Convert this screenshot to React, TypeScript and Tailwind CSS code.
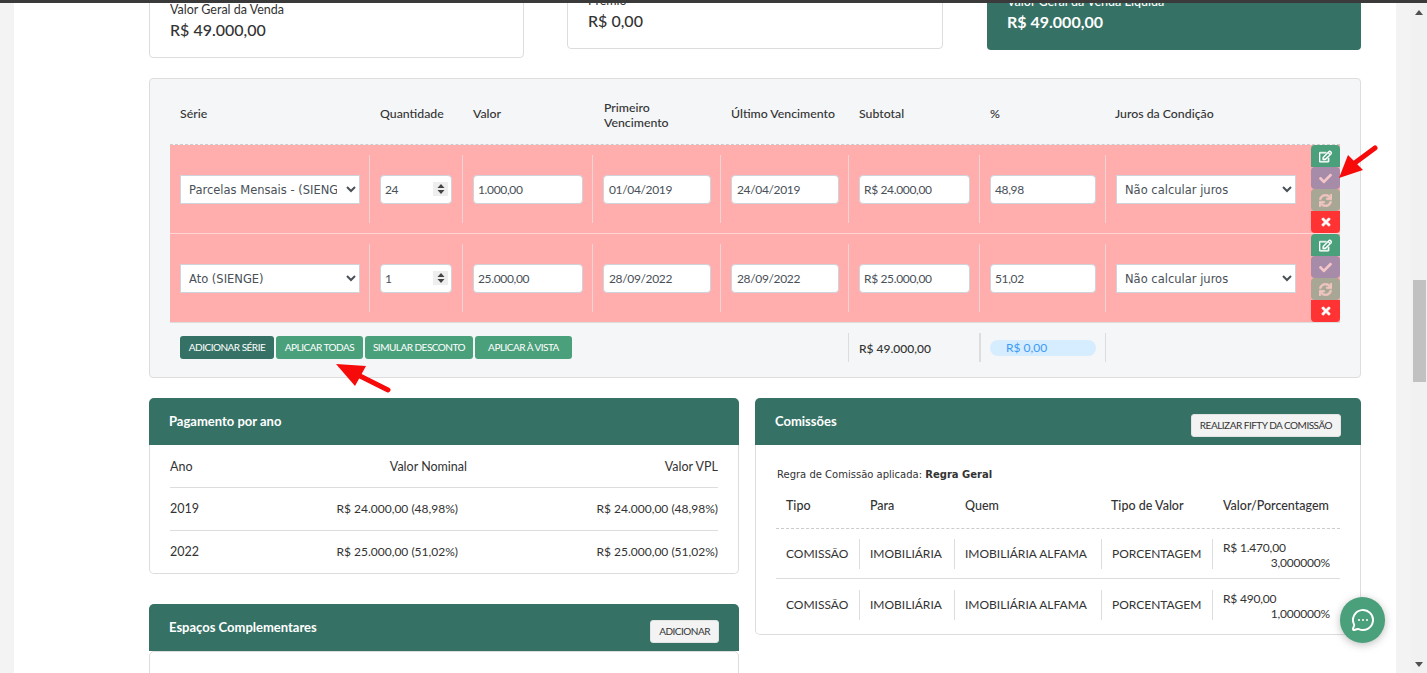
import React from "react";
import { FaRegEdit, FaCheck, FaSync, FaTimes } from "react-icons/fa";
import { MessageCircleMore } from "lucide-react";

const cols = "grid grid-cols-[199px_93px_130px_128px_128px_131px_126px_206px_29px]";
const comCols = "grid grid-cols-[83px_95px_147px_111px_128px]";
const inputCls = "h-[29px] bg-white border border-[#ced4da] rounded-[4px] text-[12px] tracking-[-0.35px] text-[#495057] outline-none";

function Cell({ first, children }: { first?: boolean; children: React.ReactNode }) {
  return (
    <div className="h-full py-[10px]">
      <div className={first ? "h-full flex items-center pl-[10px]" : "h-full flex items-center pl-[10px] border-l border-[#f0d4d4]"}>{children}</div>
    </div>
  );
}

function Sel({ value, w }: { value: string; w: string }) {
  return (
    <select
      defaultValue={value}
      className={`${w} h-[29px] bg-white border border-[#ced4da] pl-[4px] pr-[6px] pt-[1px] text-[11.5px] text-[#495057] outline-none`}
      style={{ fontFamily: '"DejaVu Sans", sans-serif' }}
    >
      <option>{value}</option>
    </select>
  );
}

function Txt({ value, w }: { value: string; w: string }) {
  return <input readOnly value={value} className={`${inputCls} ${w}`} />;
}

function ActionBtns() {
  return (
    <div className="flex flex-col h-[88px] text-[13px]">
      <div className="h-[22px] bg-[#4ba07c] rounded-t-[4px] flex items-center justify-center text-white"><FaRegEdit stroke="currentColor" strokeWidth={24} /></div>
      <div className="h-[22px] bg-[#a68ca8] rounded-[4px] flex items-center justify-center text-[#f5c6c9]"><FaCheck /></div>
      <div className="h-[22px] bg-[#a8a795] rounded-[4px] flex items-center justify-center text-[#f0c4bf]"><FaSync stroke="currentColor" strokeWidth={24} /></div>
      <div className="h-[22px] bg-[#ff3333] rounded-b-[4px] flex items-center justify-center text-white text-[12px]"><FaTimes stroke="currentColor" strokeWidth={30} /></div>
    </div>
  );
}

function Row(p: { serie: string; qtd: string; valor: string; d1: string; d2: string; sub: string; pct: string }) {
  return (
    <div className={`${cols} h-[88px] bg-[#ffadad]`}>
      <Cell first><Sel value={p.serie} w="w-[180px]" /></Cell>
      <Cell>
        <div className="relative w-[72px]">
          <input readOnly value={p.qtd} className={`${inputCls} px-[4px] w-full`} />
          <span className="absolute right-[4px] top-[7px] w-[15px] h-[14px] bg-[#eeeeee] flex items-center justify-center">
            <svg width="8" height="10" viewBox="0 0 8 10"><path d="M4 0 7.5 4H.5zM4 10 .5 6h7z" fill="#444" /></svg>
          </span>
        </div>
      </Cell>
      <Cell><Txt value={p.valor} w="w-[110px] px-[4px]" /></Cell>
      <Cell><Txt value={p.d1} w="w-[108px] px-[5px]" /></Cell>
      <Cell><Txt value={p.d2} w="w-[108px] px-[5px]" /></Cell>
      <Cell><Txt value={p.sub} w="w-[111px] px-[4px]" /></Cell>
      <Cell><Txt value={p.pct} w="w-[106px] px-[4px]" /></Cell>
      <Cell><Sel value="Não calcular juros" w="w-[180px]" /></Cell>
      <ActionBtns />
    </div>
  );
}

function PanelHead({ title, btn }: { title: string; btn?: string }) {
  return (
    <div className="h-[47px] bg-[#357265] rounded-t-[5px] flex items-start justify-between pl-[20px] pr-[20px]">
      <span className="leading-[46px] text-[13px] font-bold text-white">{title}</span>
      {btn && (
        <button className="mt-[16px] h-[23px] px-[8px] bg-[#f3f3f3] rounded-[3px] border border-[#e3e3e3] text-[10px] tracking-[-0.5px] text-[#333] uppercase">{btn}</button>
      )}
    </div>
  );
}

function ComRow({ v, p, last }: { v: string; p: string; last?: boolean }) {
  const sep = "h-[30px] flex items-center pl-[10px] border-l border-[#dddddd]";
  return (
    <div className={`${comCols} items-center text-[12px] ${last ? "h-[52px]" : "h-[50px] border-b border-[#dddddd]"}`}>
      <div className="h-[30px] flex items-center pl-[10px]">COMISSÃO</div>
      <div className={sep}>IMOBILIÁRIA</div>
      <div className={sep}>IMOBILIÁRIA ALFAMA</div>
      <div className={sep}>PORCENTAGEM</div>
      <div className="h-[30px] pt-px pl-[10px] pr-[10px] border-l border-[#dddddd] text-[12px] tracking-[-0.2px] leading-[15px]">
        <div>{v}</div>
        <div className="text-right">{p}</div>
      </div>
    </div>
  );
}

export default function App() {
  return (
    <div className="relative h-[673px] w-full overflow-hidden bg-[#f3f3f3] text-[#333] text-[12.5px]" style={{ fontFamily: 'Lato, sans-serif' }}>
      <div className="relative z-10 h-[3px] bg-[#3a3a3a]" />
      <div className="flex h-[670px]">
        <div className="w-[14px] shrink-0" />
        <main className="w-[1382px] shrink-0 bg-white pl-[135px] pr-[35px]">
          <div className="-mt-[33px] grid grid-cols-[375px_376px_375px] gap-x-[43px] items-start">
            <div className="h-[88px] border border-[#dddddd] rounded-[4px] bg-white pl-[20px] pt-[30px]">
              <div className="leading-[18px]">Valor Geral da Venda</div>
              <div className="leading-[22px] text-[16px] font-medium">R$ 49.000,00</div>
            </div>
            <div className="h-[79px] border border-[#dddddd] rounded-[4px] bg-white pl-[20px] pt-[21px]">
              <div className="leading-[18px]">Prêmio</div>
              <div className="leading-[22px] text-[16px] font-medium">R$ 0,00</div>
            </div>
            <div className="ml-px h-[80px] rounded-[4px] bg-[#357265] text-white pl-[20px] pt-[23px]">
              <div className="leading-[18px] font-medium">Valor Geral da Venda Líquida</div>
              <div className="leading-[22px] text-[16px] font-bold">R$ 49.000,00</div>
            </div>
          </div>

          <section className="mt-[20px] h-[300px] border border-[#dddddd] rounded-[4px] bg-[#f4f6f8] px-[20px]">
            <div className={`${cols} h-[66px] pt-[6px] items-center border-b border-dashed border-[#cccccc] text-[12.3px] font-medium`}>
              <div className="pl-[10px]">Série</div>
              <div className="pl-[11px]">Quantidade</div>
              <div className="pl-[11px]">Valor</div>
              <div className="pl-[12px] leading-[15px]">Primeiro<br />Vencimento</div>
              <div className="pl-[11px]">Último Vencimento</div>
              <div className="pl-[11px]">Subtotal</div>
              <div className="pl-[11px]">%</div>
              <div className="pl-[10px]">Juros da Condição</div>
              <div />
            </div>
            <Row serie="Parcelas Mensais - (SIENGE)" qtd="24" valor="1.000,00" d1="01/04/2019" d2="24/04/2019" sub="R$ 24.000,00" pct="48,98" />
            <div className="h-px bg-[#ffd6d6]" />
            <Row serie="Ato (SIENGE)" qtd="1" valor="25.000,00" d1="28/09/2022" d2="28/09/2022" sub="R$ 25.000,00" pct="51,02" />
            <div className={`${cols} h-[55px] items-start border-t border-[#dddddd]`}>
              <div className="col-span-5 pl-[10px] pt-[13px] flex gap-[2px] text-[10px] tracking-[-0.5px] text-white">
                <button className="h-[23px] w-[94px] rounded-[3px] bg-[#357265] uppercase">Adicionar Série</button>
                <button className="h-[23px] w-[87px] rounded-[3px] bg-[#4ba07c] uppercase">Aplicar Todas</button>
                <button className="h-[23px] w-[108px] rounded-[3px] bg-[#4ba07c] uppercase">Simular Desconto</button>
                <button className="h-[23px] w-[97px] rounded-[3px] bg-[#4ba07c] uppercase">Aplicar à Vista</button>
              </div>
              <div className="mt-[10px] h-[29px] border-l border-[#dddddd] pl-[10px] leading-[31px] text-[12px] font-medium">R$ 49.000,00</div>
              <div className="mt-[10px] h-[29px] border-l-2 border-[#dddddd] pl-[9px] pt-[7px]">
                <div className="w-[106px] h-[16px] rounded-full bg-[#d6ecff] pl-[16px] text-[12px] leading-[16px] text-[#3b9bf5]">R$ 0,00</div>
              </div>
              <div className="mt-[10px] h-[29px] border-l border-[#dddddd]" />
            </div>
          </section>

          <div className="mt-[20px] grid grid-cols-[590px_606px] gap-x-[16px] items-start">
            <div>
              <section>
                <PanelHead title="Pagamento por ano" />
                <div className="h-[129px] border border-t-0 border-[#dddddd] rounded-b-[5px] px-[20px]">
                  <div className="flex h-[43px] pt-[2px] items-center border-b border-[#dddddd]">
                    <div className="w-[297px] flex justify-between"><span>Ano</span><span>Valor Nominal</span></div>
                    <div className="flex-1 text-right">Valor VPL</div>
                  </div>
                  <div className="flex h-[43px] items-center border-b border-[#dddddd] text-[12px]">
                    <div className="w-[297px] pr-[9px] flex justify-between"><span className="text-[12.5px]">2019</span><span>R$ 24.000,00 (48,98%)</span></div>
                    <div className="flex-1 text-right">R$ 24.000,00 (48,98%)</div>
                  </div>
                  <div className="flex h-[42px] items-center text-[12px]">
                    <div className="w-[297px] pr-[9px] flex justify-between"><span className="text-[12.5px]">2022</span><span>R$ 25.000,00 (51,02%)</span></div>
                    <div className="flex-1 text-right">R$ 25.000,00 (51,02%)</div>
                  </div>
                </div>
              </section>
              <section className="mt-[30px]">
                <PanelHead title="Espaços Complementares" btn="Adicionar" />
                <div className="h-[40px] border border-[#dddddd] rounded-t-[5px]" />
              </section>
            </div>
            <section>
              <PanelHead title="Comissões" btn="Realizar Fifty da Comissão" />
              <div className="h-[190px] border border-t-0 border-[#dddddd] rounded-b-[5px] pl-[20px] pr-[20px]">
                <div className="pt-[23px] pl-[1px] text-[10px] leading-[14px]" style={{ fontFamily: '"DejaVu Sans", sans-serif' }}>
                  Regra de Comissão aplicada: <b>Regra Geral</b>
                </div>
                <div className={`${comCols} h-[47px] pt-[2px] items-center border-b border-dashed border-[#cccccc] font-medium`}>
                  <div className="pl-[10px]">Tipo</div>
                  <div className="pl-[11px]">Para</div>
                  <div className="pl-[11px]">Quem</div>
                  <div className="pl-[10px]">Tipo de Valor</div>
                  <div className="pl-[11px]">Valor/Porcentagem</div>
                </div>
                <ComRow v="R$ 1.470,00" p="3,000000%" />
                <ComRow v="R$ 490,00" p="1,000000%" last />
              </div>
            </section>
          </div>
        </main>
        <div className="w-[15px] shrink-0" />
        <div className="w-[16px] shrink-0 bg-[#f1f1f1] relative">
          <svg className="absolute left-[4px] top-[7px]" width="8" height="5" viewBox="0 0 8 5"><path d="M4 0 8 5H0z" fill="#505050" /></svg>
          <div className="mt-[277px] ml-[2px] w-[13px] h-[102px] bg-[#c1c1c1]" />
          <svg className="absolute left-[4px] bottom-[6px]" width="8" height="5" viewBox="0 0 8 5"><path d="M0 0h8L4 5z" fill="#505050" /></svg>
        </div>
      </div>

      <button className="absolute left-[1340px] top-[597px] w-[45px] h-[46px] rounded-full bg-[#4ba07c] shadow-[0_2px_8px_rgba(0,0,0,0.25)] flex items-center justify-center text-white">
        <MessageCircleMore size={24} strokeWidth={2} />
      </button>

      <svg className="absolute left-[1330px] top-[140px] pointer-events-none" width="52" height="45" viewBox="0 0 52 45">
        <path d="M45 8 22 25" stroke="#f60a0a" strokeWidth="5" strokeLinecap="round" />
        <path d="M9 38 18 15 33 30z" fill="#f60a0a" />
      </svg>
      <svg className="absolute left-[330px] top-[358px] pointer-events-none" width="65" height="40" viewBox="0 0 65 40">
        <path d="M58 32 30 18" stroke="#f60a0a" strokeWidth="5" strokeLinecap="round" />
        <path d="M6 6 36 8 25 28z" fill="#f60a0a" />
      </svg>
    </div>
  );
}
